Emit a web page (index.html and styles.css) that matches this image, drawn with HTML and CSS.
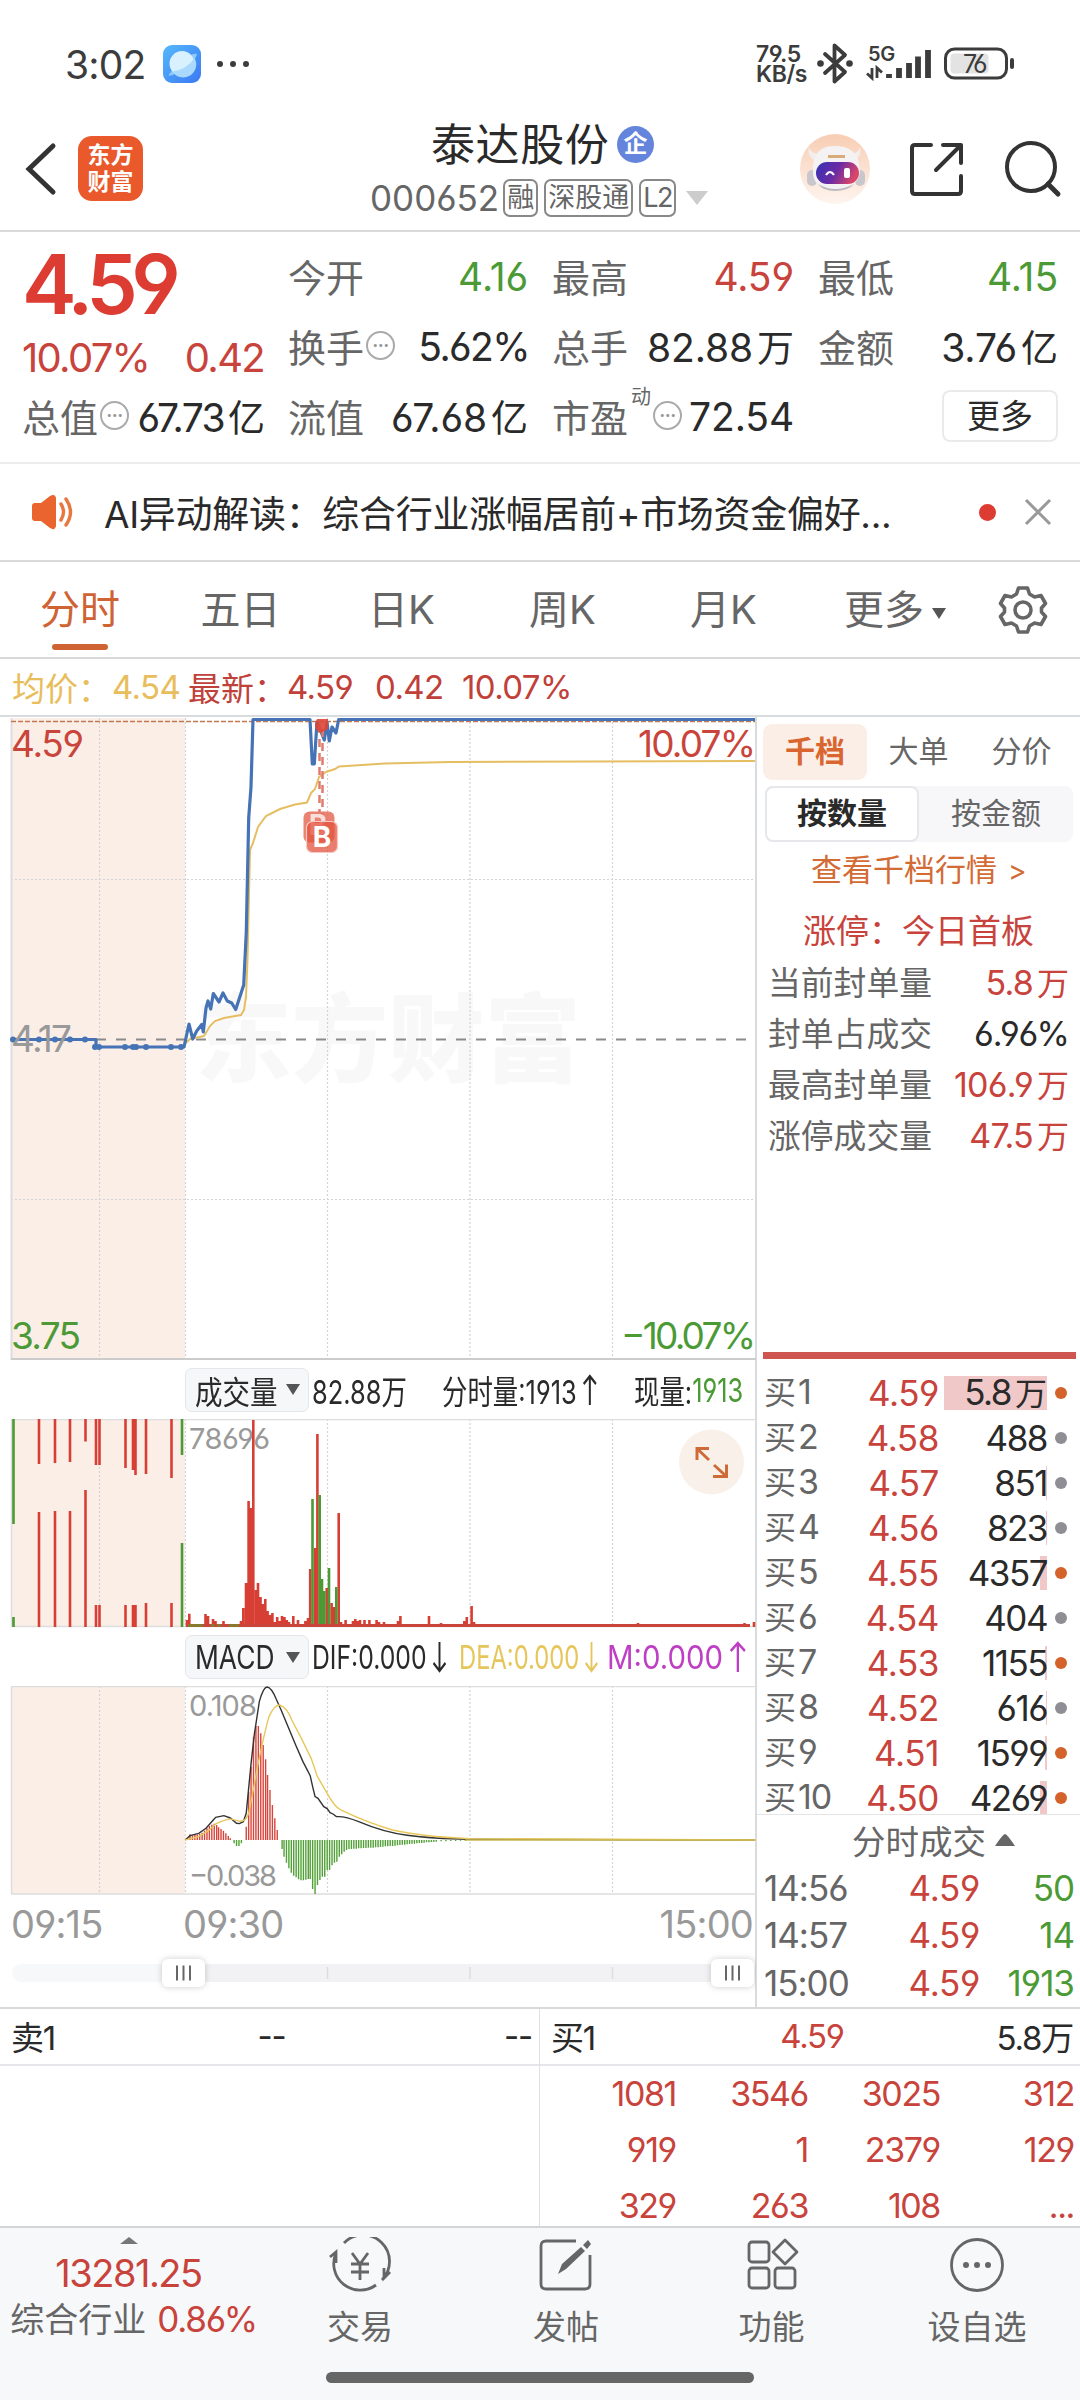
FILE: index.html
```html
<!DOCTYPE html>
<html lang="zh-CN">
<head>
<meta charset="utf-8">
<title>泰达股份 000652</title>
<link rel="stylesheet" href="styles.css">
</head>
<body>
<div class="screen">

<div class="status">
  <span class="clock">3:02</span>
  <svg class="app-badge" width="38" height="38" viewBox="0 0 38 38"><defs><linearGradient id="sky" x1="0" y1="0" x2="1" y2="1"><stop offset="0" stop-color="#55b9fb"/><stop offset="1" stop-color="#3b78f3"/></linearGradient></defs><rect width="38" height="38" rx="9" fill="url(#sky)"/><path d="M7 28Q3 33 12 29Q31 20 34 9Q33 8 27 10" fill="#8ecbfb"/><circle cx="19" cy="18.500" r="12.500" fill="#d9f0ff"/><path d="M7 27Q24 25 31.500 13A12.500 12.500 0 0 1 9 26Z" fill="#a9d9fc"/></svg>
  <span class="more-dots"><i></i><i></i><i></i></span>
  <span class="net-speed"><b>79.5</b><b>KB/s</b></span>
  <svg class="radios" width="200" height="44" viewBox="0 0 200 44" fill="none" stroke="#3c3c3c">
    <path d="M8 12L28 30L17.500 39.500V3.500L28 13L8 31" stroke-width="3.800" stroke-linejoin="round" stroke-linecap="round"/>
    <circle cx="3.500" cy="21.500" r="3.300" fill="#3c3c3c" stroke="none"/><circle cx="32.500" cy="21.500" r="3.300" fill="#3c3c3c" stroke="none"/>
    <text x="51" y="19" class="five-g">5G</text>
    <path d="M55 26V36L50 31.500M60 36V26L65 30.500" stroke-width="2.800"/>
    <path d="M72 36V32M82 36V26M92 36V21M101 36V14.500M111 36V8" stroke-width="5.800"/>
    <rect x="128.500" y="7" width="61" height="29" rx="9" stroke-width="3"/><rect x="133.500" y="11.500" width="38" height="20" rx="4" fill="#e3e3e3" stroke="none"/>
    <path d="M195 18V25" stroke-width="4" stroke-linecap="round"/>
    <text x="146" y="30.500" class="battery-pct">76</text>
  </svg>
</div>

<header class="header">
  <svg class="back" width="36" height="56" viewBox="0 0 36 56"><path d="M31 5L7 28L31 51" fill="none" stroke="#333" stroke-width="5" stroke-linecap="round"/></svg>
  <span class="brand"><b>东方</b><b>财富</b></span>
  <div class="title">
    <div class="name">泰达股份<span class="qi">企</span></div>
    <div class="code">000652<span>融</span><span>深股通</span><span>L2</span><i class="caret"></i></div>
  </div>
  <svg class="robot" width="70" height="70" viewBox="0 0 70 70"><defs><linearGradient id="peach" x1="0" y1="0" x2="0" y2="1"><stop offset="0" stop-color="#f8cdb3"/><stop offset="1" stop-color="#fef5ef"/></linearGradient><linearGradient id="visor" x1="0" y1="0" x2="1" y2=".3"><stop offset="0" stop-color="#3533b4"/><stop offset=".55" stop-color="#6b2aa5"/><stop offset="1" stop-color="#d8476a"/></linearGradient></defs>
    <circle cx="35" cy="35" r="35" fill="url(#peach)"/>
    <path d="M9 13Q7 22 14 26L19 20Q11 20 9 13ZM60 13Q62 22 55 26L50 20Q58 20 60 13Z" fill="#f3eeee"/>
    <rect x="7" y="36" width="10" height="16" rx="5" fill="#c9c6cc"/><rect x="55" y="36" width="10" height="16" rx="5" fill="#c9c6cc"/>
    <path d="M35 12C17 12 13 23 13 36C12 48 20 56 35 56S60 48 60 36C59 22 53 12 35 12Z" fill="#f4f2f3"/><path d="M18 50Q35 60 54 50Q48 57 35 57Q23 57 18 50Z" fill="#bdb9c0"/>
    <rect x="16" y="28" width="43" height="22" rx="11" fill="url(#visor)"/><path d="M28 22.500H45" stroke="#d9ab78" stroke-width="3"/>
    <path d="M26 41Q30 35 34 41" fill="none" stroke="#fff" stroke-width="2.200"/><rect x="44" y="34" width="6" height="10" rx="2" fill="#fff"/></svg>
  <svg class="share" width="56" height="56" viewBox="0 0 56 56" fill="none" stroke="#333" stroke-width="4" stroke-linecap="round" stroke-linejoin="round"><path d="M22 4H6Q3 4 3 7V50Q3 53 6 53H49Q52 53 52 50V35M34 4H52V22M52 4L27 29"/></svg>
  <svg class="search" width="58" height="58" viewBox="0 0 58 58" fill="none" stroke="#333" stroke-width="4"><circle cx="27" cy="27" r="24"/><path d="M44 44L54 54" stroke-width="5" stroke-linecap="round"/></svg>
</header>

<section class="quote">
  <div class="qcol">
    <div class="last">4.59</div>
    <div class="change"><span>10.07%</span><span>0.42</span></div>
    <div class="cell"><label>总值<i class="info">···</i></label><span class="n tight">67.73<em>亿</em></span></div>
  </div>
  <div class="qcol">
    <div class="cell"><label>今开</label><span class="n down">4.16</span></div>
    <div class="cell"><label>换手<i class="info">···</i></label><span class="n tight">5.62%</span></div>
    <div class="cell"><label>流值</label><span class="n">67.68<em>亿</em></span></div>
  </div>
  <div class="qcol">
    <div class="cell"><label>最高</label><span class="n up">4.59</span></div>
    <div class="cell"><label>总手</label><span class="n">82.88<em>万</em></span></div>
    <div class="cell"><label>市盈<sup>动</sup><i class="info">···</i></label><span class="n">72.54</span></div>
  </div>
  <div class="qcol">
    <div class="cell"><label>最低</label><span class="n down">4.15</span></div>
    <div class="cell"><label>金额</label><span class="n">3.76<em>亿</em></span></div>
    <div class="cell end"><span class="more-btn">更多</span></div>
  </div>
</section>

<section class="notice">
  <svg width="44" height="36" viewBox="0 0 44 36"><path d="M0 12Q0 9 3 9H9L18 2Q23 -1 24 4V32Q23 37 18 34L9 27H3Q0 27 0 24Z" fill="#ea642d"/><path d="M29 10Q34 18 29 26M34 5Q43 18 34 31" fill="none" stroke="#e9763f" stroke-width="3.400" stroke-linecap="round"/></svg>
  <span class="notice-text">AI异动解读：综合行业涨幅居前+市场资金偏好...</span>
  <i class="red-dot"></i>
  <svg width="28" height="28" viewBox="0 0 28 28"><path d="M2 2L26 26M26 2L2 26" stroke="#999" stroke-width="3"/></svg>
</section>

<nav class="tabs">
  <span class="tab on">分时</span><span class="tab">五日</span><span class="tab">日K</span><span class="tab">周K</span><span class="tab">月K</span><span class="tab">更多<i class="tri"></i></span>
  <svg class="gear" width="50" height="50" viewBox="0 0 50 50" fill="none" stroke="#666" stroke-width="3.600" stroke-linejoin="round"><path d="M20.500 3H29.500L31.500 9L36.500 12L43 10.500L47.500 18.500L43.500 23V27L47.500 31.500L43 39.500L36.500 38L31.500 41L29.500 47H20.500L18.500 41L13.500 38L7 39.500L2.500 31.500L6.500 27V23L2.500 18.500L7 10.500L13.500 12L18.500 9Z"/><circle cx="25" cy="25" r="8"/></svg>
</nav>

<div class="legend"><span class="avg">均价：</span><span class="avg num">4.54</span><span class="new">最新：</span><span class="new num">4.59</span><span class="new num">0.42</span><span class="new num">10.07%</span></div>

<main class="main">
<section class="charts">
  <svg class="price" width="756" height="643" viewBox="0 717 756 643">
    <rect x="11" y="718" width="174" height="642" fill="#fbeee7"/>
    <text class="watermark" x="195" y="1074" textLength="386" lengthAdjust="spacingAndGlyphs">东方财富</text>
    <path d="M99.500 718V1360M185.500 718V1360M327.500 718V1360M470 718V1360M612.500 718V1360M11 879.500H755M11 1199.500H755" class="gridline"/>
    <path d="M11.500 718V1360" stroke="#dcdde2" stroke-width="2"/><path d="M11 1359H756" stroke="#ccc" stroke-width="2"/>
    <path d="M96 1039.500H755" stroke="#8a8a8a" stroke-width="2" stroke-dasharray="10 10"/>
    <path d="M11 721.500H755" stroke="#c27850" stroke-width="1.300" stroke-dasharray="5 2"/>
    <path class="avg-line" d="M184.700 1044L190 1039L204 1036L210 1026L215 1021L224 1018L241 1015L244 1010L246 997L247.500 960L250 850L253 843L258 827L266 816L280 809L295 804.500L307 802.500L311 793L315 789L319 777L326 772L335 769L339 766.500L385 763.500L450 762L755 761"/>
    <path class="price-line" d="M11 1039.500H96V1047H184L189 1024L192.700 1039L196.700 1031L201.700 1024.500L203.300 1032L206 1008L208 1001L210.700 1009L213.300 993.500L219 1002L223 993L227.300 1001L231.700 1003L235.700 1009.500L243.700 985L246.300 932L248.700 818L251 787L253 719.500H310L312.300 764H314.300L317 722L324.300 740L327 722L329.300 741L332 727L336 733L338.700 719.500H755"/>
    <g fill="#4673b5"><circle cx="13" cy="1039.500" r="3"/><circle cx="39" cy="1039.500" r="3"/><circle cx="55" cy="1039.500" r="3"/><circle cx="70" cy="1039.500" r="3"/><circle cx="85" cy="1039.500" r="3"/><circle cx="95" cy="1047" r="3"/><circle cx="99" cy="1047" r="3"/><circle cx="125" cy="1047" r="3"/><circle cx="133" cy="1047" r="3"/><circle cx="136" cy="1047" r="3"/><circle cx="146" cy="1047" r="3"/><circle cx="171" cy="1047" r="3"/><circle cx="181" cy="1047" r="3"/></g>
    <path d="M319.500 725V812M322.500 729V820" stroke="#e17b6c" stroke-width="2.500" stroke-dasharray="8 6"/>
    <path d="M317 719H328V729L321 733Q314 730 315 724Z" fill="#dc4637" opacity=".9"/>
    <rect x="303.500" y="811.500" width="31" height="31" rx="6" fill="#e66c58" opacity=".85"/><text x="318" y="835" class="mark" opacity=".75">B</text>
    <rect x="306.500" y="821.500" width="31" height="31" rx="6" fill="#e2523e" fill-opacity=".75" stroke="#f7c8c0" stroke-width="1.200"/><text x="322" y="847" class="mark">B</text>
    <text x="11" y="757" textLength="73" class="axis red">4.59</text><text x="638" y="757" textLength="118" class="axis red">10.07%</text>
    <text x="11" y="1052" textLength="61" class="axis gray">4.17</text>
    <text x="11" y="1349" textLength="70" class="axis green">3.75</text><text x="621" y="1349" textLength="135" class="axis green">−10.07%</text>
  </svg>

  <div class="ind-head vol-head"><span class="picker"><span class="pick-vol">成交量</span><i class="tri"></i></span><span class="iv">82.88万</span><span class="iv">分时量:1913<svg width="18" height="32" viewBox="0 0 18 32"><path d="M9 31V2M1 10L9 2L17 10" class="arrow"/></svg></span><span class="iv vol-now">现量:<b>1913</b></span></div>

  <svg class="volume" width="756" height="209" viewBox="0 1419 756 209">
    <rect x="11" y="1419" width="174" height="208" fill="#fbeee7"/>
    <path d="M99.500 1419V1627M185.500 1419V1627M327.500 1419V1627M470 1419V1627M612.500 1419V1627" class="gridline"/>
    <path d="M11 1419.500H755M11 1626.500H755M11.500 1419V1627" stroke="#ddd" stroke-width="1.500"/>
    <text x="189" y="1449" textLength="81" class="small-axis">78696</text>
    <circle cx="711.500" cy="1462" r="32.500" fill="#faf0ea"/>
    <path d="M697 1460V1448.500H709M697.500 1449L709 1460M726.500 1464.500V1476.500H713M726 1476L714 1465" fill="none" stroke="#cf6b38" stroke-width="3"/>
    <path class="bar-r" d="M39 1419V1464M55 1419V1463M70 1419V1462M85.500 1419V1441.500M96 1419V1465M99.500 1419V1465M125.500 1419V1468M133 1419V1470M135.500 1419V1475M146 1419V1474M171.500 1419V1478M39 1627V1512M55 1627V1511M70 1627V1511M85.500 1627V1490M96 1627V1605M99.500 1627V1605M125.500 1627V1605M133 1627V1605M135.500 1627V1605M146 1627V1603M171.500 1627V1603"/>
    <path class="bar-g" d="M13.500 1419V1524M13.500 1627V1617M182 1419V1455M182 1627V1543"/>
    <path class="bar-r" d="M187 1627V1620M189.300 1627V1613.700M205.500 1627V1614M208 1627V1616M213 1627V1619M215.500 1627V1621M223.500 1627V1621M241 1627V1621M243.300 1627V1608M246 1627V1583M248.600 1627V1501M251 1627V1508M253.300 1627V1420M256 1627V1590M258 1627V1583M260.500 1627V1597M263 1627V1604M265.300 1627V1599M267.600 1627V1611M270 1627V1615M272.400 1627V1613M274.800 1627V1622M277.200 1627V1617M279.600 1627V1621M282 1627V1616M284.400 1627V1617M286.800 1627V1620M289 1627V1622M293.300 1627V1616M298 1627V1620M305.400 1627V1621M308 1627V1618M310.200 1627V1569M315 1627V1548M317.400 1627V1434M326.700 1627V1588M331.600 1627V1603M334 1627V1607M338.700 1627V1513M341 1627V1622M345.600 1627V1620M353 1627V1621M355.300 1627V1619M357.700 1627V1621M360 1627V1620M364.500 1627V1620M369.400 1627V1620M376.600 1627V1620M379 1627V1622M384 1627V1622M398 1627V1621M400.400 1627V1616M429 1627V1616M441 1627V1623M464.300 1627V1621M466.800 1627V1617M471.600 1627V1606M474 1627V1622M638 1627V1623M744.500 1627V1623M754 1627V1622"/>
    <path class="bar-g" d="M312.500 1627V1499M319.700 1627V1495M322 1627V1579M324.300 1627V1591M329 1627V1568M336.300 1627V1587"/>
    <path d="M186 1625.500H750" stroke="#c9443a" stroke-width="3"/><path d="M188 1625.500H203M211 1625.500H214M217 1625.500H221M229 1625.500H239" stroke="#877a2c" stroke-width="3"/>
  </svg>

  <div class="ind-head macd-head"><span class="picker"><span class="pick-macd">MACD</span><i class="tri"></i></span><span class="iv dif">DIF:0.000<svg width="18" height="32" viewBox="0 0 18 32"><path d="M9 1V30M1 22L9 30L17 22" class="arrow"/></svg></span><span class="iv dea">DEA:0.000<svg width="18" height="32" viewBox="0 0 18 32"><path d="M9 1V30M1 22L9 30L17 22" class="arrow"/></svg></span><span class="iv mval">M:0.000<svg width="18" height="32" viewBox="0 0 18 32"><path d="M9 31V2M1 10L9 2L17 10" class="arrow"/></svg></span></div>

  <svg class="macd" width="756" height="209" viewBox="0 1686 756 209">
    <rect x="11" y="1686" width="174" height="208" fill="#fbeee7"/>
    <path d="M99.500 1686V1894M185.500 1686V1894M327.500 1686V1894M470 1686V1894M612.500 1686V1894" class="gridline"/>
    <path d="M11 1686.500H755M11 1894H755M11.500 1686V1894" stroke="#ddd" stroke-width="1.500"/>
    <text x="189" y="1716" textLength="68" class="small-axis">0.108</text><text x="189" y="1886" textLength="88" class="small-axis">−0.038</text>
    <g transform="translate(0 1610) scale(.4847 .3333)" class="macd-plot">
      <path stroke="#d6453b" d="M387 690V684M392 690V673M397 690V676M402 690V675M407 690V674M412 690V672M417 690V668M422 690V662M427 690V655M432 690V648M437 690V644M442 690V641M447 690V645M451 690V652M456 690V657M461 690V662M466 690V670M471 690V678M475 690V685M508 690V650M513 690V545M518 690V470M523 690V380M528 690V348M533 690V348M538 690V370M543 690V405M548 690V448M552 690V495M557 690V540M562 690V585M567 690V625M572 690V660"/>
      <path stroke="#51a136" d="M483 690V700M488 690V708M493 690V708M498 690V700M582 690V717M586 690V740M591 690V758M596 690V775M601 690V788M606 690V797M611 690V802M616 690V808M621 690V811M626 690V811M631 690V809M636 690V807M640 690V807M645 690V837M650 690V852M655 690V825M660 690V810M665 690V800M670 690V800M675 690V780M680 690V780M685 690V766M690 690V758M695 690V755M700 690V740M705 690V733M710 690V725M715 690V720M720 690V717M725 690V717M730 690V716M735 690V716M740 690V715M745 690V715M750 690V714M755 690V714M760 690V713M765 690V713M770 690V713M775 690V712M780 690V712M785 690V711M790 690V710M795 690V709M800 690V709M805 690V708M810 690V708M815 690V707M820 690V706M825 690V705M830 690V704M835 690V704M840 690V703M845 690V702M850 690V701M855 690V701M860 690V700M865 690V699M870 690V699M875 690V698M880 690V697M885 690V697M890 690V696M895 690V696M900 690V695M910 690V694M920 690V694M930 690V693M940 690V693M950 690V692M960 690V692"/>
      <path stroke="#333" d="M382 690L392 677L410 670L425 655L440 630L445 622L462 617L475 624L488 640L494 641L502 635L508 610L512 550L518 460L525 370L535 275Q543 232 551 231Q560 232 570 268L580 300L610 405L625 455L640 497L645 530L650 560L656 565L668 590L675 596L681 608L687 612L694 620Q712 618 740 635Q790 666 840 676Q890 686 970 688L1558 690"/>
      <path stroke="#e8c759" d="M382 690L410 680L430 662L445 642Q470 624 480 628L495 634Q508 634 513 610L520 560L530 480Q545 370 555 320Q566 284 577 285Q592 292 602 330L620 380L642 445L655 500L675 550Q690 590 703 600Q760 640 810 660Q870 680 970 686L1558 690"/>
      <path stroke="#cdb850" d="M960 690H1558"/>
    </g>
  </svg>

  <div class="times"><span>09:15</span><span>09:30</span><span>15:00</span></div>
  <div class="slider"><svg width="756" height="56" viewBox="0 0 756 56"><rect x="12" y="19" width="170" height="18" rx="9" fill="#f7f8fa"/><rect x="182" y="19" width="550" height="18" fill="#f2f2f4"/><path d="M327.500 22V34M470 22V34M612.500 22V34" stroke="#ddd" stroke-width="1.500"/><g class="thumb"><rect x="162" y="14" width="43" height="28" rx="6"/><rect x="711" y="14" width="43" height="28" rx="6"/></g><path d="M177 20.500V35.500M183.500 20.500V35.500M190 20.500V35.500M726 20.500V35.500M732.500 20.500V35.500M739 20.500V35.500" stroke="#666" stroke-width="2"/></svg></div>
</section>

<aside class="side">
  <div class="side-tabs"><span class="on">千档</span><span>大单</span><span>分价</span></div>
  <div class="seg"><span class="on">按数量</span><span>按金额</span></div>
  <div class="link">查看千档行情<span>&gt;</span></div>
  <div class="limit">涨停：今日首板</div>
  <div class="stat"><span>当前封单量</span><b class="up">5.8<em>万</em></b></div>
  <div class="stat"><span>封单占成交</span><b>6.96%</b></div>
  <div class="stat"><span>最高封单量</span><b class="up">106.9<em>万</em></b></div>
  <div class="stat"><span>涨停成交量</span><b class="up">47.5<em>万</em></b></div>
  <div class="bids">
    <div class="bid"><span>买<u>1</u></span><span class="p">4.59</span><span class="q"><i style="width:103px"></i><b>5.8<em>万</em></b></span><i class="dot hot"></i></div>
    <div class="bid"><span>买<u>2</u></span><span class="p">4.58</span><span class="q"><b>488</b></span><i class="dot"></i></div>
    <div class="bid"><span>买<u>3</u></span><span class="p">4.57</span><span class="q"><i style="width:1px"></i><b>851</b></span><i class="dot"></i></div>
    <div class="bid"><span>买<u>4</u></span><span class="p">4.56</span><span class="q"><i style="width:1px"></i><b>823</b></span><i class="dot"></i></div>
    <div class="bid"><span>买<u>5</u></span><span class="p">4.55</span><span class="q"><i style="width:7px"></i><b>4357</b></span><i class="dot hot"></i></div>
    <div class="bid"><span>买<u>6</u></span><span class="p">4.54</span><span class="q"><b>404</b></span><i class="dot"></i></div>
    <div class="bid"><span>买<u>7</u></span><span class="p">4.53</span><span class="q"><i style="width:2px"></i><b>1155</b></span><i class="dot hot"></i></div>
    <div class="bid"><span>买<u>8</u></span><span class="p">4.52</span><span class="q"><i style="width:1px"></i><b>616</b></span><i class="dot"></i></div>
    <div class="bid"><span>买<u>9</u></span><span class="p">4.51</span><span class="q"><i style="width:2px"></i><b>1599</b></span><i class="dot hot"></i></div>
    <div class="bid"><span>买<u>10</u></span><span class="p">4.50</span><span class="q"><i style="width:7px"></i><b>4269</b></span><i class="dot hot"></i></div>
  </div>
  <div class="ticks-head">分时成交<svg width="20" height="12" viewBox="0 0 20 12"><path d="M10 0Q12 0 20 12H0Q8 0 10 0Z" fill="#666"/></svg></div>
  <div class="tick"><span>14:56</span><span class="up">4.59</span><span class="down">50</span></div>
  <div class="tick"><span>14:57</span><span class="up">4.59</span><span class="down">14</span></div>
  <div class="tick"><span>15:00</span><span class="up">4.59</span><span class="down">1913</span></div>
</aside>
</main>

<section class="depth">
  <div class="half sell"><div class="best"><span>卖1</span><span>--</span><span>--</span></div></div>
  <div class="half buy">
    <div class="best"><span>买1</span><span class="up">4.59</span><span>5.8万</span></div>
    <div class="orders"><span>1081</span><span>3546</span><span>3025</span><span>312</span><span>919</span><span>1</span><span>2379</span><span>129</span><span>329</span><span>263</span><span>108</span><span>...</span></div>
  </div>
</section>

<footer class="bottom">
  <div class="index"><i class="up-tri"></i><div class="iv1">13281.25</div><div class="iv2">综合行业<b>0.86%</b></div></div>
  <div class="act"><svg width="62" height="56" viewBox="0 0 62 56"><g fill="none" stroke="#666" stroke-width="2.800"><path d="M15 6A26.500 26.500 0 0 1 53 43M47 48A26.500 26.500 0 0 1 7 16M1 20L7 15V26M61 35L55 41V31M23 16L31 27L39 16M31 27V43M22 27H40M22 35H40"/></g></svg><span>交易</span></div>
  <div class="act"><svg width="56" height="56" viewBox="0 0 56 56"><g fill="none" stroke="#666" stroke-width="2.800"><path d="M38 4H8Q3 4 3 9V47Q3 52 8 52H47Q52 52 52 47V18"/></g><path d="M20 37L24 27L43 10L47 14L28 32ZM45 8L50 3L53 7L49 12Z" fill="#666"/></svg><span>发帖</span></div>
  <div class="act"><svg width="56" height="56" viewBox="0 0 56 56"><g fill="none" stroke="#666" stroke-width="2.800" stroke-linejoin="round"><rect x="5" y="5" width="20" height="20" rx="3"/><rect x="5" y="31" width="20" height="20" rx="3"/><rect x="31" y="31" width="20" height="20" rx="3"/><path d="M41 3L53 15L41 27L29 15Z"/></g></svg><span>功能</span></div>
  <div class="act"><svg width="56" height="56" viewBox="0 0 56 56"><circle cx="28" cy="28" r="25.500" fill="none" stroke="#666" stroke-width="2.800"/><g fill="#666"><circle cx="17" cy="28" r="3"/><circle cx="28" cy="28" r="3"/><circle cx="39" cy="28" r="3"/></g></svg><span>设自选</span></div>
  <i class="home"></i>
</footer>
</div>
</body>
</html>
```
FILE: styles.css
```css
* { box-sizing: border-box; }
body { margin: 0; background: #fff; }
.screen { width: 1080px; height: 2400px; display: flex; flex-direction: column; background: #fff; color: #2a2a2a; overflow: hidden; white-space: nowrap;
  font-family: Inter, "Noto Sans CJK SC", sans-serif; font-weight: 400; font-feature-settings: "cv03", "cv04"; }
i, em { font-style: normal; }
b { font-weight: inherit; }
u { text-decoration: none; }
svg { flex: none; display: block; }
.up { color: #c8433b; }
.down { color: #4b9a35; }

/* Status bar */
.status { height: 120px; flex: none; display: flex; align-items: center; padding: 8px 63px 0 65px; color: #3c3c3c; }
.clock { width: 98px; font-size: 39px; letter-spacing: -.8px; }
.app-badge { margin-right: 16px; }
.more-dots { display: flex; gap: 7px; flex: 1; }
.more-dots i { width: 6px; height: 6px; border-radius: 50%; background: #3c3c3c; }
.net-speed { display: flex; flex-direction: column; width: 61px; font-size: 23px; line-height: 20px; font-weight: 600; letter-spacing: -.4px; }
.five-g { font-size: 20px; font-weight: 600; fill: #3c3c3c; stroke: none; letter-spacing: -.3px; }
.battery-pct { font-size: 25px; fill: #3c3c3c; stroke: none; letter-spacing: -2.500px; }

/* Header */
.header { height: 112px; flex: none; display: flex; align-items: center; border-bottom: 2px solid #d9d9d9; padding: 0 18px 18px 22px; }
.back { margin: 5px 20px 0 0; }
.brand { width: 65px; height: 65px; margin-top: 5px; border-radius: 14px; background: #e9592b; color: #fff; display: flex; flex-direction: column; justify-content: center; align-items: center; font-size: 23px; line-height: 27px; font-weight: 700; }
.title { width: 360px; margin: 7px 65px 0 223px; }
.name { display: flex; align-items: center; gap: 10px; padding-left: 65px; font-size: 44px; line-height: 52px; letter-spacing: .6px; height: 56px; }
.qi { width: 37px; height: 37px; border-radius: 50%; background: #6585dc; color: #fff; font-size: 24px; line-height: 36px; text-align: center; font-weight: 700; margin-left: -2px; }
.code { display: flex; align-items: center; gap: 5px; height: 50px; padding-left: 4px; font-size: 35px; letter-spacing: 0; color: #666; }
.code span { font-size: 27px; line-height: 34px; border: 2px solid #888; border-radius: 7px; padding: 0 2px; letter-spacing: 0; margin-left: -1px; }
.code span + span { margin-left: 1px; }
.code span:nth-child(3) { letter-spacing: -1.500px; }
.caret { border: 11px solid transparent; border-top: 14px solid #ccc; border-bottom: 0; margin-left: 5px; }
.robot { margin: 5px 39px 0 auto; }
.share { margin: 6px 39px 0 0; }
.search { margin-top: 6px; }

/* Quote summary */
.quote { height: 232px; flex: none; display: grid; grid-template-columns: 242px 240px 242px 240px; column-gap: 24px; padding: 9px 0 0 22px; border-bottom: 2px solid #ededed; }
.cell { height: 70px; display: flex; align-items: center; justify-content: space-between; }
.cell label { font-size: 38px; color: #666; display: flex; align-items: center; margin-top: -2px; }
.n { font-size: 39px; letter-spacing: -.1px; margin-right: 0; }
.n.tight { letter-spacing: -1.600px; margin-right: -1px; }
.n em { font-size: 37px; letter-spacing: 0; margin-left: 4px; }
.last { height: 90px; line-height: 88px; font-size: 82px; font-weight: 600; letter-spacing: -6.500px; color: #dc3c32; }
.change { height: 50px; line-height: 54px; display: flex; justify-content: space-between; font-size: 40px; letter-spacing: -1.7px; color: #c8433b; }
.info { width: 29px; height: 29px; margin-left: 2px; border: 2px solid #aaa; border-radius: 50%; font-size: 18px; line-height: 25px; text-align: center; color: #999; letter-spacing: -.5px; font-weight: 700; }
.cell sup { font-size: 20px; align-self: flex-start; line-height: 20px; margin: -1px 0 0 3px; }
.end { justify-content: flex-end; }
.more-btn { width: 116px; height: 52px; line-height: 48px; border: 2px solid #e8eaeb; border-radius: 8px; text-align: center; font-size: 33px; }

/* Notice strip */
.notice { height: 98px; flex: none; display: flex; align-items: center; padding: 0 28px 0 32px; border-bottom: 2px solid #d9d9d9; }
.notice-text { font-size: 37px; letter-spacing: -.3px; margin-left: 28px; flex: 1; }
.red-dot { width: 17px; height: 17px; border-radius: 50%; background: #dc3c32; margin-right: 28px; }

/* Period tabs */
.tabs { height: 97px; flex: none; display: grid; grid-template-columns: 160px 161px 161px 161px 161px 182px 1fr; align-items: center; border-bottom: 2px solid #d9d9d9; font-size: 40px; color: #666; }
.tab { height: 95px; line-height: 95px; text-align: center; }
.tab.on { color: #cf6334; position: relative; }
.tab.on::after { content: ""; position: absolute; left: 52px; bottom: 7px; width: 56px; height: 6px; border-radius: 3px; background: #cf6334; }
.tri { display: inline-block; border: 7px solid transparent; border-top: 11px solid #555; border-bottom: 0; margin-left: 8px; vertical-align: middle; }
.gear { margin-left: 12px; }

.legend { height: 58px; flex: none; display: flex; align-items: center; padding-left: 12px; font-size: 33px; border-bottom: 2px solid #d9dcdf; }
.legend .num { letter-spacing: -.6px; }
.avg { color: #e8bd5c; }
.new { color: #c0403a; }
.legend span:nth-child(2) { width: 77px; padding-left: 1px; }
.legend span:nth-child(4) { width: 88px; }
.legend span:nth-child(5) { width: 87px; }

/* Charts */
.main { height: 1292px; flex: none; display: flex; border-bottom: 2px solid #d9d9d9; }
.charts { width: 757px; border-right: 2px solid #d9dcdf; }
.gridline { stroke: #d2d3d6; stroke-width: 1.200; stroke-dasharray: 2 2; fill: none; }
.watermark { font-size: 96px; font-weight: 900; fill: #f8f8f8; }
.avg-line { fill: none; stroke: #e6be62; stroke-width: 2; }
.price-line { fill: none; stroke: #4673b5; stroke-width: 3.200; stroke-linejoin: round; }
.mark { font-size: 28px; font-weight: 700; fill: #fff; text-anchor: middle; }
.axis { font-size: 37px; }
.red { fill: #c9443a; }
.green { fill: #4b9a35; }
.gray { fill: #999; }
.small-axis { font-size: 29px; fill: #999; }
.bar-r { stroke: #d83f34; stroke-width: 2.600; }
.bar-g { stroke: #4b9a35; stroke-width: 2.600; }
.macd-plot path { fill: none; stroke-width: 1.400; vector-effect: non-scaling-stroke; }

/* Indicator headers use condensed lettering */
.ind-head { height: 59px; display: grid; align-items: center; padding-left: 185px; font-size: 33px; }
.vol-head { grid-template-columns: 127px 130px 192px 1fr; }
.macd-head { grid-template-columns: 127px 147px 148px 1fr; height: 58px; }
.picker { width: 124px; height: 44px; display: flex; align-items: center; justify-content: space-between; padding: 0 8px 0 9px; background: #f6f7f9; border: 1px solid #e3e6ea; border-radius: 7px; }
.picker .tri { margin: 0; }
.pick-vol, .pick-macd { width: 82px; transform-origin: 0 50%; }
.pick-vol { font-size: 32px; transform: scaleX(.86); }
.pick-macd { transform: scaleX(.8); }
.iv { justify-self: start; display: flex; align-items: center; gap: 8px; transform-origin: 0 50%; transform: scaleX(.77); }
.iv.dif { transform: scaleX(.75); }
.iv.dea { transform: scaleX(.72); color: #e6c65b; }
.iv.mval { transform: scaleX(.89); color: #bf3fc4; }
.arrow { fill: none; stroke: currentColor; stroke-width: 2.600; }
.vol-now { gap: 0; }
.vol-now b { color: #4b9a35; }
.times { height: 59px; display: flex; align-items: center; padding: 0 2px 1px 11px; font-size: 38px; color: #999; letter-spacing: -.8px; }
.times span:nth-child(1) { width: 172px; }
.times span:nth-child(3) { margin-left: auto; }
.slider { height: 56px; margin-top: -9px; }
.thumb { fill: #fff; filter: drop-shadow(0 0 3px #0003); }

/* Order book */
.side { flex: 1; display: flex; flex-direction: column; padding-top: 7px; }
.side > div { flex: none; }
.side-tabs { height: 56px; margin-left: 6px; display: flex; font-size: 30px; line-height: 54px; color: #666; }
.side-tabs span { width: 103px; text-align: center; }
.side-tabs .on { width: 104px; background: #fbeee7; border-radius: 9px; color: #d9652f; font-weight: 700; }
.seg { margin: 6px 8px 0; height: 56px; display: flex; background: #f7f7fa; border-radius: 8px; font-size: 30px; line-height: 51px; color: #666; }
.seg span { width: 154px; text-align: center; border: 2px solid transparent; }
.seg .on { background: #fff; border-color: #e6e7ea; border-radius: 8px; color: #2a2a2a; font-weight: 700; }
.link { height: 56px; line-height: 56px; padding-left: 54px; font-size: 31px; color: #d36b35; }
.link span { margin-left: 11px; font-size: 28px; }
.limit { height: 60px; line-height: 66px; padding-left: 46px; font-size: 33px; color: #c8433b; }
.stat { height: 51px; line-height: 50px; display: flex; justify-content: space-between; padding: 0 12px 0 11px; font-size: 32.800px; color: #666; }
.stat b { font-size: 34px; letter-spacing: -.8px; color: #2a2a2a; }
.stat b.up { color: #c8433b; }
.stat em, .bid em { font-size: 32px; margin-left: 4px; letter-spacing: 0; }
.bids { margin: 190px 5px 0 6px; border-top: 7px solid #cf5650; padding: 11px 0 0 1px; height: 462px; overflow: hidden; }
.bid { height: 45px; display: grid; grid-template-columns: 70px 105px 108px 20px; align-items: center; font-size: 35px; line-height: 30px; color: #666; }
.bid > span:first-child { font-size: 32px; }
.bid u { font-size: 34px; margin-left: 2px; letter-spacing: -1px; }
.bid .p { text-align: right; color: #c8433b; letter-spacing: -.4px; }
.q { display: flex; justify-content: flex-end; align-items: center; height: 34px; position: relative; color: #2a2a2a; letter-spacing: -1.500px; }
.q i { position: absolute; right: 0; top: 0; height: 34px; background: #f0c8c8; }
.q b { position: relative; }
.dot { width: 12px; height: 12px; border-radius: 50%; background: #8f8e95; margin-left: 8px; }
.dot.hot { background: #d4622b; }
.ticks-head { height: 50px; border-top: 1px solid #e5e5e5; display: flex; align-items: center; padding-left: 95px; gap: 9px; font-size: 33.500px; color: #666; }
.tick { height: 47.500px; display: grid; grid-template-columns: 120px 96px 1fr; align-items: center; margin: 0 7px; font-size: 35px; letter-spacing: -1px; color: #666; }
.tick span + span { text-align: right; }
.tick .up { color: #c8433b; letter-spacing: -.3px; }
.tick .down { color: #4b9a35; }

/* Depth */
.depth { height: 219px; flex: none; display: flex; border-bottom: 2px solid #d3d5d8; }
.half { width: 540px; }
.sell { border-right: 1px solid #e0e0e6; }
.best { height: 57px; display: grid; grid-template-columns: 1fr auto 1fr; align-items: center; border-bottom: 2px solid #e5e5ea; padding: 0 7px 2px 11px; font-size: 33px; letter-spacing: -1.200px; }
.best span:last-child { text-align: right; }
.orders { height: 160px; overflow: hidden; display: grid; grid-template-columns: 136px 132px 132px 134px; grid-auto-rows: 56px; align-items: center; text-align: right; font-size: 34px; line-height: 40px; letter-spacing: -1.400px; color: #c8433b; }

/* Bottom bar */
.bottom { flex: 1; background: #f7f8fa; display: grid; grid-template-columns: 257px 206px 206px 205px 206px; grid-template-rows: 130px 1fr; }
.index { display: flex; flex-direction: column; align-items: center; padding-top: 9px; }
.up-tri { border: 9px solid transparent; border-bottom: 7px solid #777; border-top: 0; }
.iv1 { font-size: 38px; line-height: 50px; margin-top: 4px; letter-spacing: -1.500px; color: #c8433b; }
.iv2 { font-size: 34px; line-height: 42px; margin-left: 10px; color: #666; }
.iv2 b { margin-left: 11px; font-size: 35px; letter-spacing: -1.200px; color: #c8433b; }
.act { display: flex; flex-direction: column; align-items: center; gap: 13px; padding-top: 9px; font-size: 33px; line-height: 42px; color: #666; }
.home { grid-column: 1 / -1; justify-self: center; width: 428px; height: 11px; margin-top: 14px; border-radius: 6px; background: #666; }
```
